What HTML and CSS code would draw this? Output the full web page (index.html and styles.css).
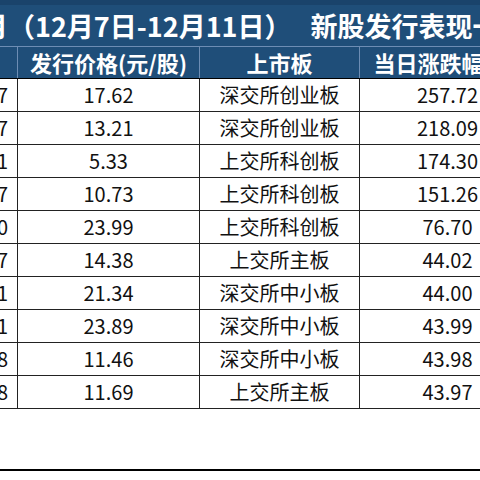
FILE: index.html
```html
<!DOCTYPE html>
<html lang="zh">
<head>
<meta charset="utf-8">
<link rel="stylesheet" href="styles.css">
</head>
<body>
<div class="sheet">
  <div class="title"><span class="t1">月（12月7日-12月11日）</span><span class="t2">新股发行表现一览</span></div>
  <table class="grid">
    <colgroup><col class="c1"><col class="c2"><col class="c3"><col class="c4"></colgroup>
    <thead>
      <tr><th>上市日期</th><th>发行价格(元/股)</th><th>上市板</th><th>当日涨跌幅(%)</th></tr>
    </thead>
    <tbody>
      <tr><td>2020/12/7</td><td>17.62</td><td>深交所创业板</td><td>257.72</td></tr>
      <tr><td>2020/12/7</td><td>13.21</td><td>深交所创业板</td><td>218.09</td></tr>
      <tr><td>2020/12/11</td><td>5.33</td><td>上交所科创板</td><td>174.30</td></tr>
      <tr><td>2020/12/7</td><td>10.73</td><td>上交所科创板</td><td>151.26</td></tr>
      <tr><td>2020/12/10</td><td>23.99</td><td>上交所科创板</td><td>76.70</td></tr>
      <tr><td>2020/12/7</td><td>14.38</td><td>上交所主板</td><td>44.02</td></tr>
      <tr><td>2020/12/11</td><td>21.34</td><td>深交所中小板</td><td>44.00</td></tr>
      <tr><td>2020/12/11</td><td>23.89</td><td>深交所中小板</td><td>43.99</td></tr>
      <tr><td>2020/12/8</td><td>11.46</td><td>深交所中小板</td><td>43.98</td></tr>
      <tr><td>2020/12/8</td><td>11.69</td><td>上交所主板</td><td>43.97</td></tr>
    </tbody>
  </table>
  <div class="rule"></div>
</div>
</body>
</html>
```

FILE: styles.css
```css
html, body {
  margin: 0;
  padding: 0;
  background: #ffffff;
}
body {
  width: 480px;
  height: 480px;
  overflow: hidden;
  font-family: "Noto Sans CJK SC", "Noto Sans", sans-serif;
  color: #111111;
}
.sheet {
  width: 480px;
  height: 480px;
  overflow: hidden;
}
.title {
  height: 41px;
  border-top: 5px solid #1a436b;
  background: #1f4e79;
  color: #ffffff;
  font-weight: bold;
  font-size: 27px;
  line-height: 41px;
  white-space: nowrap;
  display: flex;
}
.t1 {
  margin-left: -19px;
}
.t2 {
  margin-left: 19px;
}
.grid {
  border-collapse: collapse;
  table-layout: fixed;
  margin-left: -120px;
  width: 655px;
}
.c1 { width: 137px; }
.c2 { width: 182px; }
.c3 { width: 160px; }
.c4 { width: 176px; }
.grid th {
  height: 31px;
  padding: 0;
  background: #1f4e79;
  color: #ffffff;
  font-size: 22px;
  font-weight: bold;
  text-align: center;
  white-space: nowrap;
  overflow: hidden;
  border-top: 1px solid #6d8db4;
  border-left: 1px solid #6d8db4;
  border-right: 1px solid #6d8db4;
  border-bottom: 1px solid #000000;
  line-height: 31px;
}
.grid td {
  height: 32px;
  padding: 0;
  font-size: 20px;
  text-align: center;
  white-space: nowrap;
  overflow: hidden;
  border: 1px solid #222222;
  line-height: 32px;
}
.grid td:first-child {
  text-align: right;
  padding-right: 9px;
}
.grid td:nth-child(3) {
  border-left-color: #555555;
}
.rule {
  margin-top: 60px;
  height: 2px;
  background: #000000;
}
```
